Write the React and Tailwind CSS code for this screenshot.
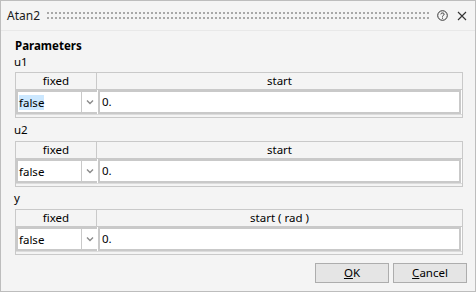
import React from 'react';

const font = { fontFamily: '"Noto Sans", "Liberation Sans", sans-serif' };

const ParamTable = ({ head, selected }) => {
  return (
    <div className="ml-[14px] w-[448px] border border-[#c9c9c9] bg-[#f4f4f4]">
      {/* header */}
      <div className="flex h-[17px] border-b border-[#c9c9c9] text-[11.5px] leading-[16px] text-black">
        <div className="w-[81px] border-r border-[#c9c9c9] text-center">fixed</div>
        <div className="flex-1 text-center">{head}</div>
      </div>
      {/* row */}
      <div className="flex h-[24px] bg-white">
        <div className="flex w-[81px] border-2 border-[#c9c9c9] border-r-0">
          <div className="flex flex-1 items-center border-r border-[#c9c9c9] pl-[1px] text-[11.5px]">
            <span className={selected ? 'bg-[#cce8ff] leading-[15px]' : 'leading-[15px]'}>false</span>
          </div>
          <div className="flex w-[15px] items-center justify-center">
            <svg width="8" height="6" viewBox="0 0 8 6">
              <path d="M1 1.5 L4 4.5 L7 1.5" fill="none" stroke="#8a8a8a" strokeWidth="1.4" />
            </svg>
          </div>
        </div>
        <div className="ml-[1px] mr-[1px] flex flex-1 items-center border-2 border-[#c9c9c9] pl-[2px] text-[11.5px]">
          0.
        </div>
      </div>
      <div className="h-[3px] border-t border-[#dcdcdc] bg-[#f4f4f4]" />
    </div>
  );
};

const Grip = () => (
  <svg width="384" height="10" viewBox="0 0 384 10" className="shrink-0">
    {Array.from({ length: 96 }).map((_, i) => (
      <g key={i} fill="#a8a8a8">
        <rect x={i * 4} y="1" width="2" height="2" />
        <rect x={i * 4} y="6" width="2" height="2" />
      </g>
    ))}
  </svg>
);

export default function App() {
  return (
    <div
      style={font}
      className="flex h-[292px] w-[476px] flex-col border border-[#bdbdbd] bg-[#f4f4f4] text-black"
    >
      {/* title bar */}
      <div className="flex h-[30px] items-center border-b border-[#e8e8e8] pl-[6px] pr-[8px]">
        <span className="w-[46px] text-[12px] text-[#1a1a1a]">Atan2</span>
        <Grip />
        <div className="ml-[6px] flex items-center gap-[9px]">
          <svg width="11" height="11" viewBox="0 0 11 11">
            <circle cx="5.5" cy="5.5" r="4.8" fill="none" stroke="#333" strokeWidth="1" />
            <path d="M3.8 4.3 C3.8 2.6 7.2 2.6 7.2 4.2 C7.2 5.3 5.5 5.3 5.5 6.6" fill="none" stroke="#333" strokeWidth="1" />
            <rect x="5" y="7.6" width="1" height="1.1" fill="#333" />
          </svg>
          <svg width="10" height="10" viewBox="0 0 10 10">
            <path d="M1 1 L9 9 M9 1 L1 9" stroke="#333" strokeWidth="1.1" />
          </svg>
        </div>
      </div>

      <div className="pt-[7px] pl-[14px] text-[11.5px] font-bold leading-[16px]">Parameters</div>

      <div className="pl-[13px] pb-[3px] text-[11.5px] leading-[15px]">u1</div>
      <ParamTable head="start" selected />

      <div className="pl-[13px] pt-[5px] pb-[4px] text-[11.5px] leading-[14px]">u2</div>
      <ParamTable head="start" />

      <div className="pl-[13px] pt-[4px] pb-[4px] text-[11.5px] leading-[14px]">y</div>
      <ParamTable head="start ( rad )" />

      <div className="mt-auto mb-[8px] flex justify-end gap-[4px] pr-[8px]">
        <button className="h-[20px] w-[74px] border border-[#adadad] bg-[#e5e5e5] text-[11.5px] leading-[18px]">
          <span className="underline">O</span>K
        </button>
        <button className="h-[20px] w-[74px] border border-[#adadad] bg-[#e5e5e5] text-[11.5px] leading-[18px]">
          <span className="underline">C</span>ancel
        </button>
      </div>
    </div>
  );
}
